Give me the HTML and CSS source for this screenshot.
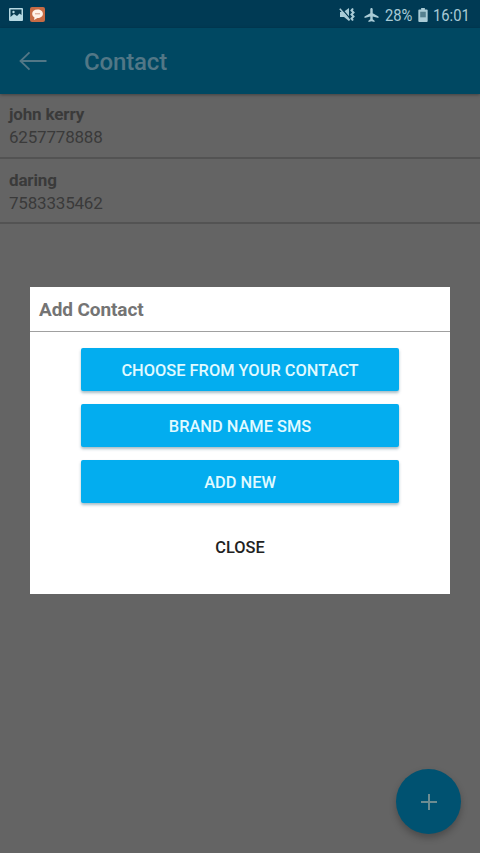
FILE: index.html
```html
<!DOCTYPE html>
<html lang="en">
<head>
<meta charset="utf-8">
<title>Contact</title>
<link rel="stylesheet" href="styles.css">
</head>
<body>
<div class="screen">
  <div class="status">
    <svg class="picture" width="14" height="13" viewBox="0 0 14 13"><rect width="14" height="13" rx="1" fill="#b5d8e2"/><path d="M1.500 1.500h11v5.500l-2-1.500-2.500 2.500-3-2-3.500 3z" fill="#073a50"/><circle cx="4.500" cy="4" r="1.200" fill="#b5d8e2"/></svg>
    <svg class="chat" width="15" height="15" viewBox="0 0 15 15"><rect width="15" height="15" rx="2" fill="#c66b45"/><path d="M7.500 2.500c3.300 0 5.400 1.800 5.400 4.300s-2.100 4.200-5.400 4.200l-3.500 2 .5-2.600C3.200 9.700 2.200 8.400 2.200 6.800c0-2.500 2-4.300 5.300-4.300z" fill="#fff2e9"/><path d="M5 6.800h5" stroke="#d69b80" stroke-width="1"/></svg>
    <div class="right">
      <svg width="17" height="15" viewBox="0 0 17 15"><path d="M1 5h3.500L10 1v13l-5-4H1z" fill="#a9cbd6"/><path d="M2 1l9 10.500" stroke="#053a52" stroke-width="1.200"/><path d="M.8 1.800l10 11.500" stroke="#a9cbd6" stroke-width="1.500"/><path d="M14 1.500l-1.500 2 2 2-2 2 2 2-2 2 1.500 2" fill="none" stroke="#a9cbd6" stroke-width="2"/></svg>
      <svg class="plane" width="15" height="14" viewBox="0 0 15 15"><path d="M7.500 0c.8 0 1.300.7 1.300 1.500v4L15 9v1.800l-6.200-1.600v2.900l2 1.500V15l-3.300-.9-3.300.9v-1.400l2-1.500V9.200L0 10.800V9l6.200-3.500v-4C6.200.7 6.700 0 7.500 0z" fill="#a9cbd6"/></svg>
      <span class="percent">28%</span>
      <svg class="battery" width="10" height="14" viewBox="0 0 10 15"><path d="M3 0h4v1.500h2a1 1 0 0 1 1 1V14a1 1 0 0 1-1 1H1a1 1 0 0 1-1-1V2.500a1 1 0 0 1 1-1h2z" fill="#a9cbd6"/><path d="M2 4h6v6H2z" fill="#55808f"/></svg>
      <span class="time">16:01</span>
    </div>
  </div>
  <header class="bar">
    <svg width="28" height="20" viewBox="0 0 28 20"><path d="M27.500 10H1.500M10.500 1.300L1.500 10l9 8.700" fill="none" stroke="#527786" stroke-width="1.800"/></svg>
    <h1>Contact</h1>
  </header>
  <main>
    <div class="row"><div class="name">john kerry</div><div class="number">6257778888</div></div>
    <div class="row"><div class="name">daring</div><div class="number">7583335462</div></div>
  </main>
  <div class="fab"><svg width="18" height="18" viewBox="0 0 18 18"><path d="M9 1v16M1 9h16" stroke="#6d8c91" stroke-width="2"/></svg></div>
  <section class="dialog">
    <h2>Add Contact</h2>
    <div class="actions">
      <button>CHOOSE FROM YOUR CONTACT</button>
      <button>BRAND NAME SMS</button>
      <button>ADD NEW</button>
      <button class="close">CLOSE</button>
    </div>
  </section>
</div>
</body>
</html>
```
FILE: styles.css
```css
* { box-sizing: border-box; }
body { margin: 0; font-family: Roboto, "Liberation Sans", sans-serif; }
.screen { position: relative; width: 480px; height: 853px; background: #646464; overflow: hidden; }
.status { height: 28px; background: #003a54; display: flex; align-items: center; padding: 1px 10px 0 9px; color: #a9cbd6; font-size: 17.400px; }
.chat { margin-left: 7px; }
.right { margin-left: auto; display: flex; align-items: center; }
.plane { margin-left: 8px; }
.percent { width: 28px; margin-left: 6px; white-space: nowrap; }
.percent, .time { transform-origin: 0 50%; transform: scaleX(.85); line-height: 20px; padding-top: 1px; }
.battery { margin-left: 5px; }
.time { width: 37px; margin-left: 5px; }
.bar { position: relative; height: 66px; background: #004862; display: flex; align-items: center; padding-left: 19px; box-shadow: 0 1px 3px rgba(0,0,0,.35); }
.bar h1 { margin: 2px 0 0 37px; font-size: 24px; line-height: 30px; font-weight: 500; letter-spacing: -.15px; color: #527786; }
.row { height: 65px; padding: 11px 9px 0; border-bottom: 2px solid #535353; color: #3a3a3a; }
.row:first-child { padding-top: 10px; }
.name { font-size: 17px; line-height: 20px; font-weight: 700; letter-spacing: -.15px; }
.number { margin-top: 3px; font-size: 17px; line-height: 20px; letter-spacing: -.2px; }
.fab { position: absolute; left: 396px; top: 769px; width: 65px; height: 65px; border-radius: 50%; background: #005271; display: flex; align-items: center; justify-content: center; box-shadow: 0 4px 7px rgba(0,0,0,.25); }
.dialog { position: absolute; left: 30px; top: 287px; width: 420px; height: 307px; background: #fff; }
.dialog h2 { margin: 0; height: 45px; padding: 1px 0 0 9px; border-bottom: 1px solid #a0a0a0; font-size: 19px; line-height: 44px; font-weight: 700; letter-spacing: -.1px; color: #747474; }
.actions { display: flex; flex-direction: column; align-items: center; padding-top: 16px; gap: 13px; }
button { width: 318px; height: 43px; padding: 2px 0 0; border: 0; border-radius: 2px; background: #03adef; color: #e0faff; font: 500 16.400px/20px Roboto, "Liberation Sans", sans-serif; box-shadow: 0 2px 3px rgba(0,65,90,.35); }
.close { margin-top: 9px; background: none; color: #222; box-shadow: none; }
```
